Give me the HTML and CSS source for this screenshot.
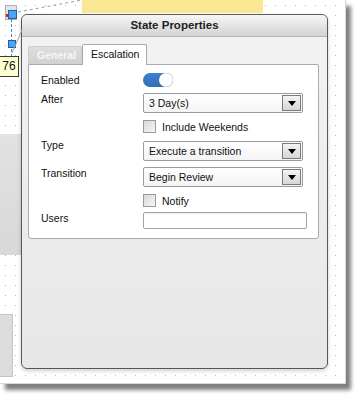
FILE: index.html
```html
<!DOCTYPE html>
<html>
<head>
<meta charset="utf-8">
<link rel="stylesheet" href="styles.css">
</head>
<body>
<div class="canvas">
  <div class="yellow-bar"></div>
  <div class="side-panel"></div>
  <div class="side-box"></div>

  <svg class="connectors" width="100" height="80" viewBox="0 0 100 80">
    <line x1="18" y1="12" x2="82" y2="0" stroke="#9a9a9a" stroke-width="1" stroke-dasharray="3 3"/>
    <rect x="5.5" y="5.5" width="11" height="14" fill="#e4e4e4" stroke="#b0b0b0"/>
    <line x1="11.5" y1="19" x2="11.5" y2="57" stroke="#3a8ad8" stroke-width="1" stroke-dasharray="3 2"/>
    <rect x="8.5" y="10.5" width="8" height="8" fill="#4aa6f2" stroke="#1d5fa8"/>
    <rect x="6" y="14" width="2.5" height="3" fill="#d42020"/>
    <rect x="8.5" y="40.5" width="7" height="7" fill="#4aa6f2" stroke="#1d5fa8"/>
    <line x1="22" y1="30" x2="12" y2="53" stroke="#9f9f9f" stroke-width="1"/>
  </svg>

  <div class="node-label">76</div>

  <div class="dialog">
    <div class="titlebar">State Properties</div>
    <div class="dbody">
      <div class="tabs">
        <div class="tab">General</div>
        <div class="tab active">Escalation</div>
      </div>
      <div class="panel">
        <div class="row r-toggle">
          <div class="lbl lbl-toggle">Enabled</div>
          <div class="field"><div class="switch"><div class="knob"></div></div></div>
        </div>
        <div class="row r-after">
          <div class="lbl">After</div>
          <div class="field"><div class="select"><span>3 Day(s)</span><div class="arrow"><div class="tri"></div></div></div></div>
        </div>
        <div class="row r-check">
          <div class="lbl"></div>
          <div class="field check"><div class="box"></div><span>Include Weekends</span></div>
        </div>
        <div class="row r-type">
          <div class="lbl lbl-up">Type</div>
          <div class="field"><div class="select"><span>Execute a transition</span><div class="arrow"><div class="tri"></div></div></div></div>
        </div>
        <div class="row r-trans">
          <div class="lbl">Transition</div>
          <div class="field"><div class="select"><span>Begin Review</span><div class="arrow"><div class="tri"></div></div></div></div>
        </div>
        <div class="row r-check">
          <div class="lbl"></div>
          <div class="field check"><div class="box"></div><span>Notify</span></div>
        </div>
        <div class="row r-users">
          <div class="lbl">Users</div>
          <div class="field"><div class="input"></div></div>
        </div>
      </div>
    </div>
  </div>
</div>
</body>
</html>
```

FILE: styles.css
```css
html, body {
  margin: 0;
  padding: 0;
  background: #ffffff;
  width: 361px;
  height: 399px;
  overflow: hidden;
  font-family: "Liberation Sans", Arial, sans-serif;
}

.canvas {
  position: relative;
  width: 345px;
  height: 383px;
  background-color: #ffffff;
  background-image: radial-gradient(circle at 5.5px 5.5px, #b8b8b8 0.6px, rgba(255,255,255,0) 0.9px);
  background-size: 10px 10px;
  box-shadow: 5px 6px 4px rgba(0,0,0,0.5);
  border-right: 1px solid #d8d8d8;
  border-bottom: 1px solid #d8d8d8;
}

.yellow-bar {
  position: absolute;
  left: 82px;
  top: 0;
  width: 181px;
  height: 13px;
  background: #f9e794;
}

.side-panel {
  position: absolute;
  left: 0;
  top: 134px;
  width: 40px;
  height: 121px;
  background: linear-gradient(#e2e2e2, #d8d8d8);
}

.side-box {
  position: absolute;
  left: -1px;
  top: 314px;
  width: 12px;
  height: 61px;
  background: #dddddd;
  border: 1px solid #c4c4c4;
}

.connectors {
  position: absolute;
  left: 0;
  top: 0;
  z-index: 3;
}

.node-label {
  position: absolute;
  left: -1px;
  top: 56px;
  width: 18px;
  height: 19px;
  background: #ffffd2;
  border: 1px solid #3a3a3a;
  font-size: 12px;
  line-height: 19px;
  text-align: center;
  color: #111;
  z-index: 4;
}

.dialog {
  position: absolute;
  left: 21px;
  top: 14px;
  width: 305px;
  height: 353px;
  border: 1px solid #585858;
  border-radius: 6px;
  background: linear-gradient(#f3f3f3, #e7e7e7);
  box-shadow: 0 2px 4px rgba(0,0,0,0.18);
  display: flex;
  flex-direction: column;
  overflow: hidden;
  z-index: 2;
}

.titlebar {
  height: 21px;
  line-height: 21px;
  border-bottom: 1px solid #b4b4b4;
  background: linear-gradient(#f6f6f6, #d3d3d3);
  text-align: center;
  font-weight: bold;
  font-size: 11.5px;
  color: #222;
  border-radius: 5px 5px 0 0;
}

.dbody {
  padding: 7px 8px 0 6px;
}

.tabs {
  display: flex;
  align-items: flex-end;
  height: 20px;
}

.tab {
  height: 17px;
  line-height: 17px;
  padding: 0 8px;
  width: 36px;
  background: linear-gradient(#dedede, #d0d0d0);
  border: 1px solid #cfcfcf;
  border-bottom: none;
  border-radius: 2px 2px 0 0;
  color: #f6f6f6;
  font-weight: bold;
  font-size: 10.5px;
  white-space: nowrap;
}

.tab.active {
  width: 47px;
  height: 20px;
  line-height: 19px;
  background: #ffffff;
  border: 1px solid #a9a9a9;
  border-bottom: none;
  color: #111;
  font-weight: normal;
  margin-bottom: -1px;
  position: relative;
  z-index: 1;
}

.panel {
  border: 1px solid #a9a9a9;
  border-radius: 0 2px 3px 3px;
  background: #ffffff;
  padding: 8px 0 9px 12px;
  display: flex;
  flex-direction: column;
}

.row {
  display: grid;
  grid-template-columns: 102px 1fr;
  align-items: start;
}

.r-toggle { height: 14px; }
.r-after { margin-top: 6px; }
.r-check { margin-top: 7px; }
.r-type { margin-top: 8px; }
.r-trans { margin-top: 6px; }
.r-users { margin-top: 5px; }

.lbl {
  font-size: 10.5px;
  line-height: 12px;
  color: #111;
}

.lbl-toggle { padding-top: 1px; }
.lbl-up { margin-top: -2px; }

.field {
  display: flex;
}

.switch {
  width: 30px;
  height: 14px;
  border-radius: 7px;
  background: linear-gradient(#3f82cf, #2f6db6);
  position: relative;
}

.knob {
  position: absolute;
  right: 0;
  top: 0;
  width: 14px;
  height: 14px;
  border-radius: 50%;
  background: radial-gradient(circle at 45% 40%, #ffffff 55%, #e4e4e4 100%);
  box-shadow: 0 0 1px rgba(0,0,0,0.4);
}

.select {
  box-sizing: border-box;
  width: 160px;
  height: 20px;
  border: 1px solid #9b9b9b;
  border-radius: 2px;
  background: linear-gradient(#ffffff, #f4f4f4);
  display: flex;
  align-items: center;
  justify-content: space-between;
  padding: 0 1px 0 5px;
  font-size: 10.5px;
  color: #111;
}

.arrow {
  box-sizing: border-box;
  width: 19px;
  height: 16px;
  border: 1px solid #7a7a7a;
  background: linear-gradient(#f4f4f4, #d6d6d6);
  display: flex;
  align-items: center;
  justify-content: center;
}

.tri {
  width: 0;
  height: 0;
  border-left: 4px solid transparent;
  border-right: 4px solid transparent;
  border-top: 5px solid #000;
}

.check {
  align-items: center;
  gap: 6px;
  font-size: 10.5px;
  color: #111;
  height: 13px;
}

.box {
  box-sizing: border-box;
  width: 13px;
  height: 13px;
  border: 1px solid #9a9a9a;
  background: linear-gradient(135deg, #d8d8d8, #f6f6f6);
}

.input {
  box-sizing: border-box;
  width: 164px;
  height: 17px;
  border: 1px solid #a3a3a3;
  border-radius: 2px;
  background: #ffffff;
  box-shadow: inset 0 1px 1px rgba(0,0,0,0.06);
}
```
